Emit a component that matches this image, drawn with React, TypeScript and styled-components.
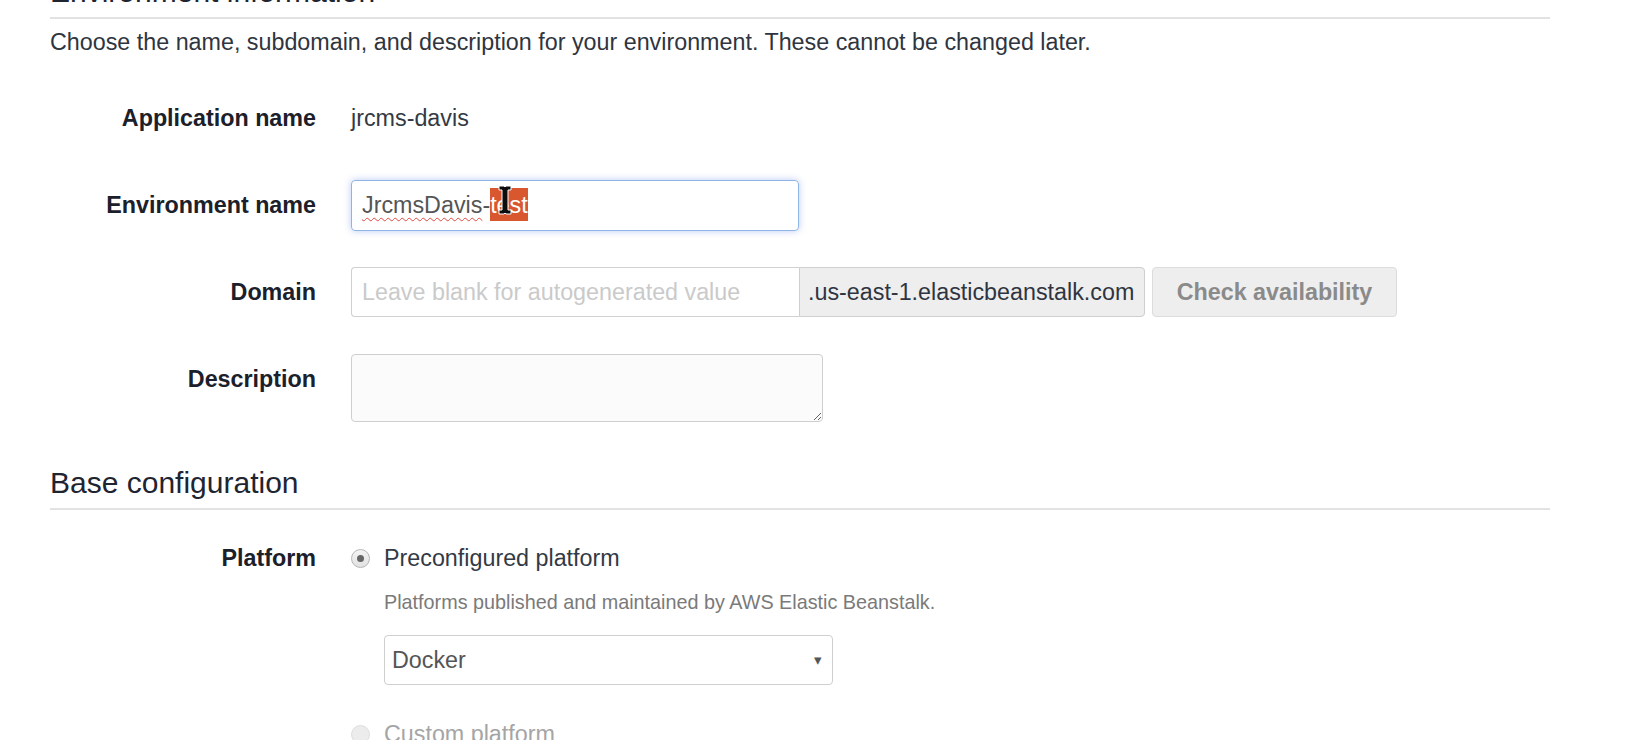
import React from "react";
import styled, {createGlobalStyle} from "styled-components";

const GlobalStyle = createGlobalStyle`
  html, body {
    margin: 0;
    padding: 0;
    background: #ffffff;
    overflow: hidden;
  }
  body {
    font-family: "Liberation Sans", Arial, Helvetica, sans-serif;
    color: #333333;
  }
`;

const IBeam: React.FC = () => (
  <svg width="16" height="32" viewBox="0 0 16 32">
    <path
      d="M2 2h5l1 1 1-1h5v4h-3v20h3v4H9l-1-1-1 1H2v-4h3V6H2z"
      fill="#0d0d0d"
      stroke="#fff"
      strokeWidth="1"
    />
  </svg>
);

const Radio: React.FC<{checked?: boolean; disabled?: boolean}> = ({checked, disabled}) => (
  <RadioCircle $disabled={disabled}>{checked && <RadioDot />}</RadioCircle>
);

export default function App() {
  return (
    <Page>
      <GlobalStyle />
      <SectionTitle $first>Environment information</SectionTitle>
      <Intro>Choose the name, subdomain, and description for your environment. These cannot be changed later.</Intro>

      <Row>
        <Label>Application name</Label>
        <Value>jrcms-davis</Value>
      </Row>

      <Row>
        <Label>Environment name</Label>
        <FocusedInput>
          <Misspelled>JrcmsDavis</Misspelled>-<Selected>test</Selected>
          <Cursor>
            <IBeam />
          </Cursor>
        </FocusedInput>
      </Row>

      <Row>
        <Label>Domain</Label>
        <InputGroup>
          <TextInput placeholder="Leave blank for autogenerated value" />
          <Addon>.us-east-1.elasticbeanstalk.com</Addon>
        </InputGroup>
        <CheckButton disabled>Check availability</CheckButton>
      </Row>

      <Row>
        <Label>Description</Label>
        <TextArea />
      </Row>

      <SectionTitle>Base configuration</SectionTitle>

      <PlatformRow>
        <Label>Platform</Label>
        <Options>
          <Option>
            <Radio checked />
            <OptionText>Preconfigured platform</OptionText>
          </Option>
          <Help>Platforms published and maintained by AWS Elastic Beanstalk.</Help>
          <SelectBox>
            <span>Docker</span>
            <Caret>▾</Caret>
          </SelectBox>
          <Option $muted>
            <Radio disabled />
            <OptionText $muted>Custom platform</OptionText>
          </Option>
        </Options>
      </PlatformRow>
    </Page>
  );
}

const Page = styled.div`
  width: 1500px;
  padding-left: 50px;
  font-size: 23.3px;
`;

const SectionTitle = styled.h3<{$first?: boolean}>`
  margin: ${({$first}) => ($first ? "-25px 0 0" : "0")};
  padding: ${({$first}) => ($first ? "0 0 9px" : "8px 0 9px")};
  font-size: 30px;
  line-height: 33px;
  font-weight: normal;
  color: #1e2530;
  border-bottom: 2px solid #e2e2e2;
`;

const Intro = styled.p`
  margin: 7px 0 34px;
  line-height: 33px;
  color: #2f3540;
`;

const Row = styled.div`
  display: flex;
  align-items: flex-start;
  min-height: 51px;
  margin-bottom: 36px;
`;

const Label = styled.div`
  flex: 0 0 266px;
  box-sizing: border-box;
  margin-right: 35px;
  text-align: right;
  font-weight: bold;
  line-height: 51px;
  color: #1b202a;
`;

const Value = styled.div`
  line-height: 51px;
  color: #333a45;
`;

const FocusedInput = styled.div`
  position: relative;
  box-sizing: border-box;
  width: 448px;
  height: 51px;
  padding: 0 10px;
  line-height: 49px;
  color: #555;
  border: 1px solid #90b4e6;
  border-radius: 4px;
  box-shadow: 0 0 7px rgba(102, 140, 233, 0.45);
  white-space: nowrap;
`;

const Misspelled = styled.span`
  text-decoration: underline wavy #e0483e;
  text-decoration-thickness: 1px;
  text-underline-offset: 4px;
`;

const Selected = styled.span`
  background: #d8572f;
  color: #fff;
  padding: 4px 0 3px;
`;

const Cursor = styled.span`
  position: absolute;
  left: 145px;
  top: 3px;
  line-height: 0;
`;

const InputGroup = styled.div`
  display: flex;
  height: 50px;
`;

const TextInput = styled.input`
  box-sizing: border-box;
  width: 448px;
  height: 50px;
  padding: 0 10px;
  font: inherit;
  color: #555;
  border: 1px solid #d0d0d0;
  border-right: none;
  border-radius: 4px 0 0 4px;
  outline: none;

  &::placeholder {
    color: #cacaca;
  }
`;

const Addon = styled.div`
  box-sizing: border-box;
  width: 346px;
  padding: 0 8px;
  line-height: 48px;
  color: #2f3540;
  background: #eeeeee;
  border: 1px solid #cfcfcf;
  border-radius: 0 4px 4px 0;
  white-space: nowrap;
`;

const CheckButton = styled.button`
  box-sizing: border-box;
  width: 245px;
  height: 50px;
  margin-left: 7px;
  font: inherit;
  font-weight: bold;
  color: #8a8a8a;
  background: #eeeeee;
  border: 1px solid #dcdcdc;
  border-radius: 4px;
`;

const TextArea = styled.textarea`
  box-sizing: border-box;
  width: 472px;
  height: 68px;
  font: inherit;
  background: #fbfbfb;
  border: 1px solid #cfcfcf;
  border-radius: 4px;
  outline: none;
`;

const PlatformRow = styled(Row)`
  margin-top: 23px;
`;

const Options = styled.div`
  display: flex;
  flex-direction: column;
  align-items: flex-start;
`;

const Option = styled.div<{$muted?: boolean}>`
  display: flex;
  align-items: center;
  height: 51px;
  margin-top: ${({$muted}) => ($muted ? "24px" : "0")};
`;

const RadioCircle = styled.span<{$disabled?: boolean}>`
  box-sizing: border-box;
  display: flex;
  align-items: center;
  justify-content: center;
  width: 19px;
  height: 19px;
  margin-right: 14px;
  border-radius: 50%;
  border: 1px solid ${({$disabled}) => ($disabled ? "#dedede" : "#b5b5b5")};
  background: ${({$disabled}) => ($disabled ? "#ececec" : "linear-gradient(#f4f4f4, #e2e2e2)")};
`;

const RadioDot = styled.span`
  width: 7px;
  height: 7px;
  border-radius: 50%;
  background: #666;
`;

const OptionText = styled.span<{$muted?: boolean}>`
  color: ${({$muted}) => ($muted ? "#a5a5a5" : "#333a45")};
`;

const Help = styled.div`
  margin: 4px 0 0 33px;
  font-size: 19.8px;
  line-height: 28px;
  color: #7a7a7a;
`;

const SelectBox = styled.div`
  box-sizing: border-box;
  display: flex;
  align-items: center;
  justify-content: space-between;
  width: 449px;
  height: 50px;
  margin: 19px 0 0 33px;
  padding: 0 10px 0 7px;
  color: #555;
  background: #fff;
  border: 1px solid #cfcfcf;
  border-radius: 4px;
`;

const Caret = styled.span`
  font-size: 15px;
  color: #555;
`;
